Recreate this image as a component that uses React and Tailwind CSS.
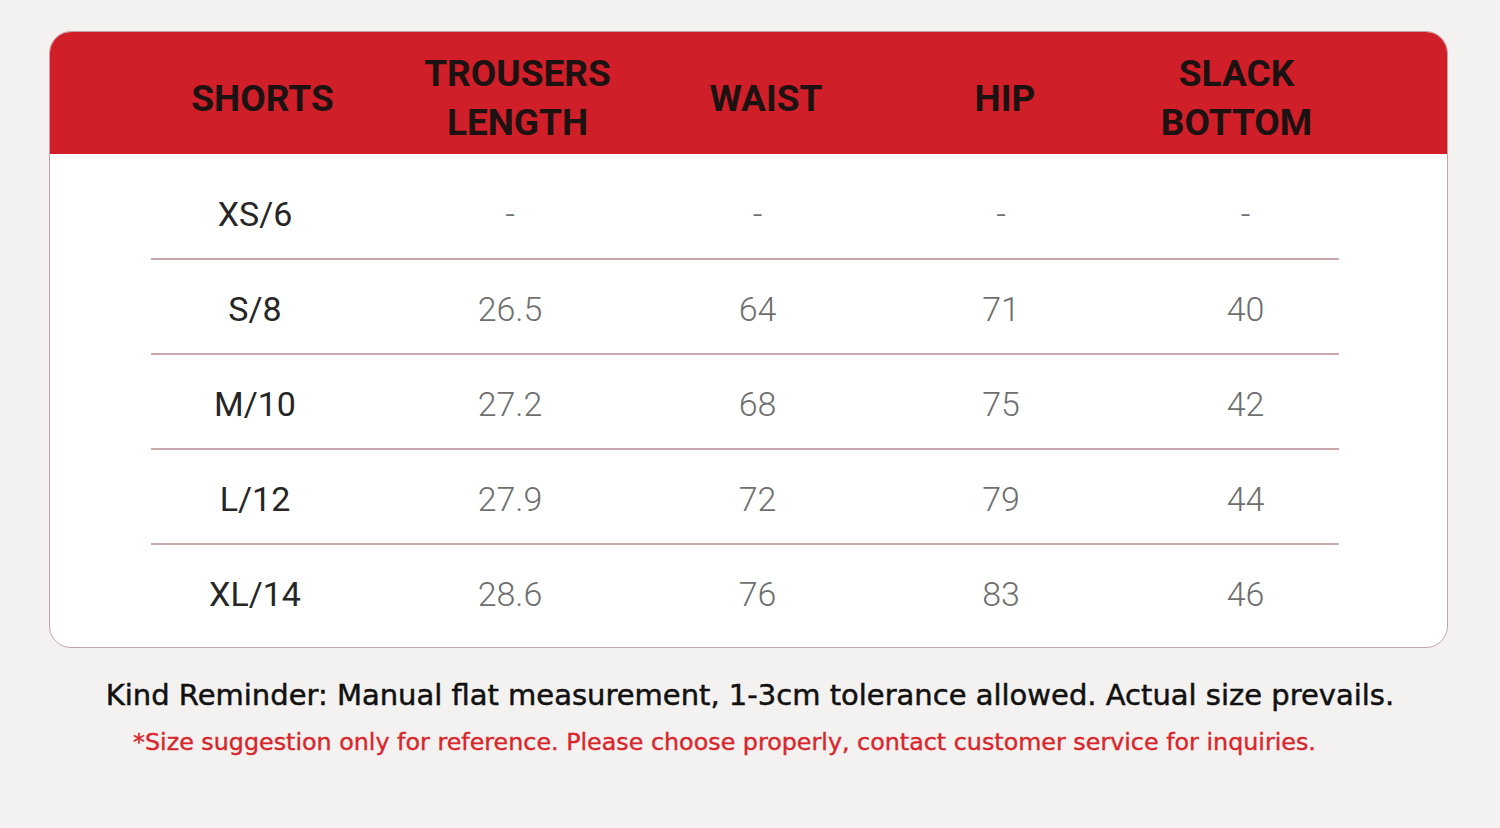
import React from 'react';

const HEADERS = [
  ['SHORTS'],
  ['TROUSERS', 'LENGTH'],
  ['WAIST'],
  ['HIP'],
  ['SLACK', 'BOTTOM'],
];

const ROWS = [
  ['XS/6', '-', '-', '-', '-'],
  ['S/8', '26.5', '64', '71', '40'],
  ['M/10', '27.2', '68', '75', '42'],
  ['L/12', '27.9', '72', '79', '44'],
  ['XL/14', '28.6', '76', '83', '46'],
];

const noteFont = { fontFamily: '"DejaVu Sans", "Open Sans", sans-serif' };

export default function App() {
  return (
    <div
      className="min-h-screen w-full bg-[#f4f2f0] pt-[31px]"
      style={{ fontFamily: 'Roboto, "Noto Sans", sans-serif' }}
    >
      <div className="ml-[49px] w-[1399px] h-[617px] rounded-[22px] border-[1.5px] border-[#c4a3a7] bg-white overflow-hidden">
        {/* header band */}
        <div className="h-[122px] bg-[#d01f28] grid grid-cols-[257px_253px_244px_234px_229px] pl-[84px] pt-[10px] items-center">
          {HEADERS.map((lines, i) => (
            <div
              key={i}
              className="text-center text-[37px] leading-[49px] font-bold text-[#1c1212]"
            >
              {lines.map((l) => (
                <div key={l}>{l}</div>
              ))}
            </div>
          ))}
        </div>

        {/* body rows */}
        <div className="pt-[11px]">
          {ROWS.map((row, r) => (
            <div key={r}>
              <div className="h-[93px] grid grid-cols-[258px_252px_243px_244px_245px] pl-[76px] items-center pt-[5px]">
                {row.map((cell, c) => (
                  <div
                    key={c}
                    className={
                      c === 0
                        ? 'text-center text-[34px] font-normal text-[#262626]'
                        : 'text-center text-[34px] font-light text-[#6f6f6f]'
                    }
                  >
                    {cell}
                  </div>
                ))}
              </div>
              {r < ROWS.length - 1 && (
                <div className="ml-[101px] mr-[108px] h-[2px] bg-[#caa7aa]" />
              )}
            </div>
          ))}
        </div>
      </div>

      {/* notes */}
      <p
        className="mt-[29px] text-center text-[29px] leading-[36px] text-[#111111] [-webkit-text-stroke:0.5px_#111111]"
        style={noteFont}
      >
        Kind Reminder: Manual flat measurement, 1-3cm tolerance allowed. Actual size prevails.
      </p>
      <p
        className="mt-[14px] pr-[51px] text-center text-[23.8px] leading-[30px] text-[#d9262c] [-webkit-text-stroke:0.4px_#d9262c]"
        style={noteFont}
      >
        *Size suggestion only for reference. Please choose properly, contact customer service for inquiries.
      </p>
    </div>
  );
}
